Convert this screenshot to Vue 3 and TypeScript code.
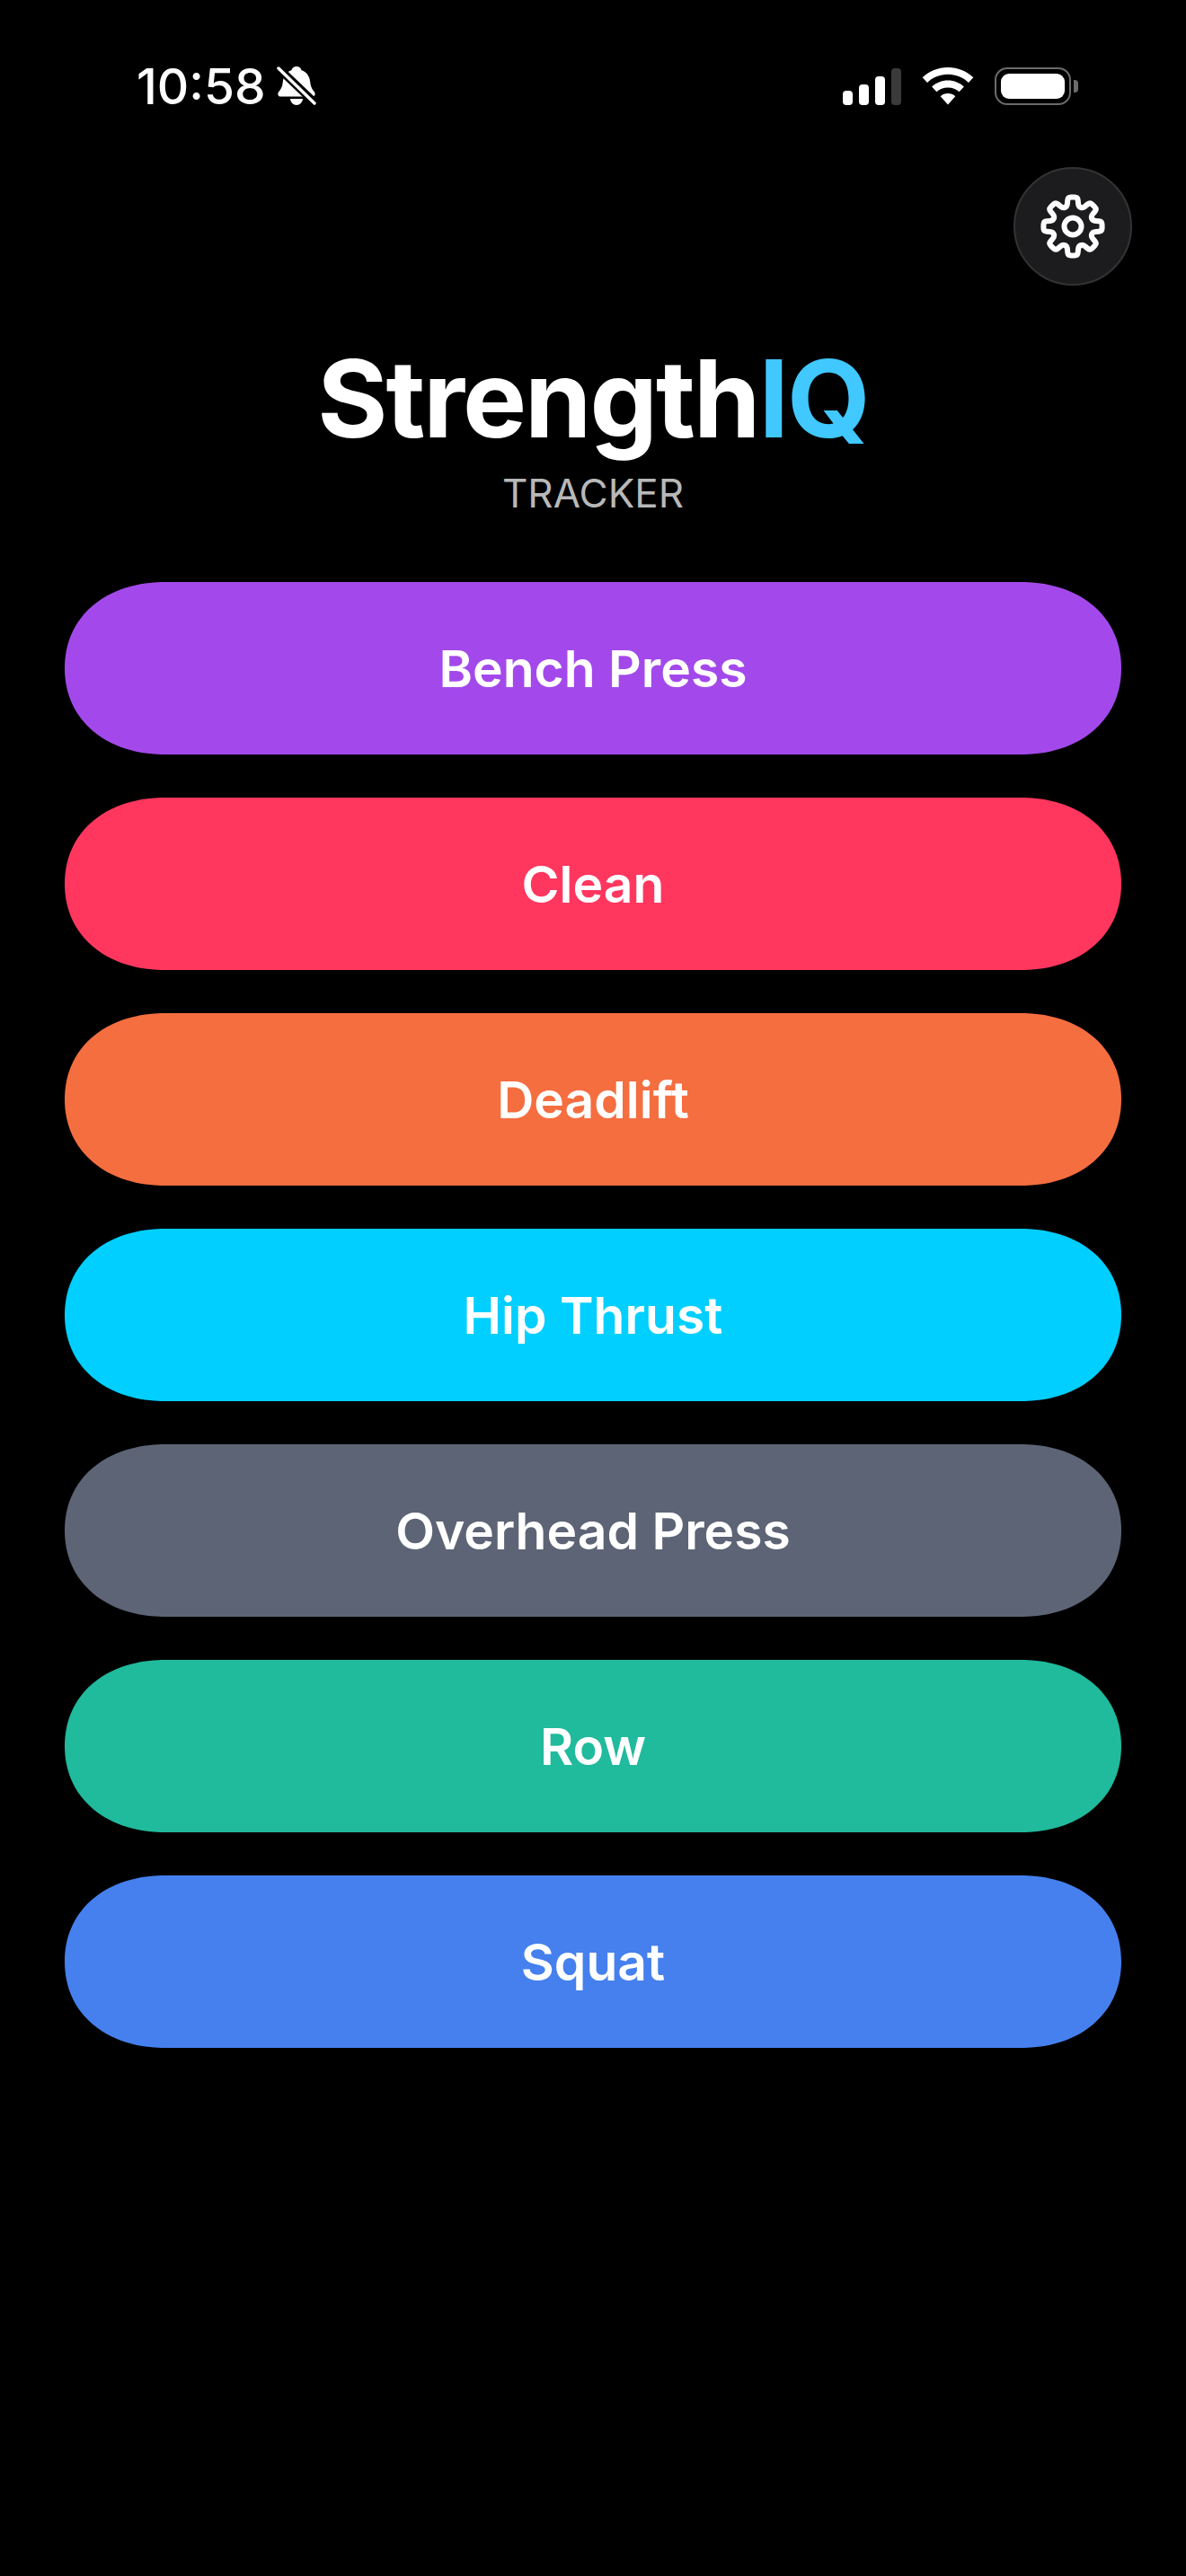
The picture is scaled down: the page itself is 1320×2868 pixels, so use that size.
<script setup lang="ts">
interface Exercise {
  name: string;
  color: string;
}

const exercises: Exercise[] = [
  { name: 'Bench Press', color: '#a349eb' },
  { name: 'Clean', color: '#ff375f' },
  { name: 'Deadlift', color: '#f56e40' },
  { name: 'Hip Thrust', color: '#00cfff' },
  { name: 'Overhead Press', color: '#5d6475' },
  { name: 'Row', color: '#20ba9c' },
  { name: 'Squat', color: '#4580ee' }
];

// 8-tooth cog outline: a polygon with its corners trimmed and rounded
function buildGearPath(): string {
  const pts: [number, number][] = [];
  for (let i = 0; i < 8; i++) {
    const mid = i * 45 - 90;
    const spec: [number, number][] = [
      [23, -16],
      [33, -9.5],
      [33, 9.5],
      [23, 16]
    ];
    for (const [r, d] of spec) {
      const a = ((mid + d) * Math.PI) / 180;
      pts.push([r * Math.cos(a), r * Math.sin(a)]);
    }
  }
  const towards = (from: [number, number], to: [number, number]) => {
    const len = Math.hypot(to[0] - from[0], to[1] - from[1]);
    const t = Math.min(0.5, 3.5 / len);
    return `${(from[0] + (to[0] - from[0]) * t).toFixed(2)} ${(from[1] + (to[1] - from[1]) * t).toFixed(2)}`;
  };
  let d = '';
  pts.forEach((p, i) => {
    const prev = pts[(i + pts.length - 1) % pts.length];
    const next = pts[(i + 1) % pts.length];
    d += `${i === 0 ? 'M' : 'L'}${towards(p, prev)}Q${p[0].toFixed(2)} ${p[1].toFixed(2)} ${towards(p, next)}`;
  });
  return d + 'Z';
}

const gearPath = buildGearPath();
</script>

<template>
  <div class="screen">
    <header class="status">
      <div class="status-left">
        <span class="time">10:58</span>
        <svg class="bell" viewBox="0 0 44 46" width="44" height="46">
          <path fill="#fff" d="M22 1c3 0 5 1.700 5.600 4.200 6 1.900 9 6.800 9.600 13 .5 4.800 2 8.400 4.600 11 1.600 1.700 1 5.300-2 5.300H4.200c-3 0-3.600-3.600-2-5.300 2.600-2.600 4.100-6.200 4.600-11 .6-6.200 3.600-11.100 9.600-13C17 2.700 19 1 22 1z" />
          <path fill="#fff" d="M15 37h14c-.4 4-3.300 7-7 7s-6.600-3-7-7z" />
          <path stroke="#000" stroke-width="9" d="M-1 0l46 44" />
          <path stroke="#fff" stroke-width="3.500" stroke-linecap="round" d="M2 3l40 39" />
        </svg>
      </div>
      <div class="status-right">
        <div class="signal">
          <i class="bar b1"></i>
          <i class="bar b2"></i>
          <i class="bar b3"></i>
          <i class="bar b4"></i>
        </div>
        <svg class="wifi" viewBox="0 0 58 42" width="58" height="42">
          <path fill="#fff" d="M29 0c10.800 0 20.800 4.200 28.300 11.300L52 17C46 11.300 37.900 7.800 29 7.800S12 11.300 6 17L.7 11.300C8.200 4.200 18.200 0 29 0z" />
          <path fill="#fff" d="M29 14.500c6.900 0 13.200 2.700 17.900 7l-5.300 5.700C38.300 24.200 33.900 22.400 29 22.400s-9.300 1.800-12.600 4.800l-5.300-5.700c4.700-4.300 11-7 17.900-7z" />
          <path fill="#fff" d="M29 29c3.200 0 6.100 1.200 8.300 3.200L29 41.500l-8.300-9.300C22.900 30.200 25.800 29 29 29z" />
        </svg>
        <div class="battery">
          <div class="battery-fill"></div>
        </div>
        <i class="battery-nub"></i>
      </div>
    </header>

    <div class="toolbar">
      <button class="settings" type="button" aria-label="Settings">
        <svg viewBox="-40 -40 80 80" width="80" height="80" fill="none" stroke="#fff" stroke-width="6" stroke-linejoin="round">
          <path :d="gearPath" />
          <circle cx="0" cy="0" r="9.500" />
        </svg>
      </button>
    </div>

    <div class="brand">
      <h1 class="title">Strength<span class="accent">IQ</span></h1>
      <p class="subtitle">TRACKER</p>
    </div>

    <main class="list">
      <button
        v-for="item in exercises"
        :key="item.name"
        class="exercise"
        type="button"
        :style="{ background: item.color }"
      >
        {{ item.name }}
      </button>
    </main>
  </div>
</template>

<style scoped>
.screen {
  height: 2868px;
  background: #000;
  color: #fff;
  font-family: Inter, "Liberation Sans", sans-serif;
  overflow: hidden;
}

.status {
  display: flex;
  justify-content: space-between;
  align-items: center;
  height: 48px;
  padding: 72px 120px 0 152px;
}

.status-left {
  display: flex;
  align-items: center;
  gap: 12px;
}

.time {
  font-size: 55px;
  font-weight: 500;
  line-height: 48px;
}

.bell {
  display: block;
}

.status-right {
  display: flex;
  align-items: center;
}

.signal {
  display: flex;
  align-items: flex-end;
  gap: 7px;
  margin-right: 23px;
}

.bar {
  display: block;
  width: 11px;
  background: #fff;
  border-radius: 4px;
}

.b1 {
  height: 16px;
}

.b2 {
  height: 23px;
}

.b3 {
  height: 32px;
}

.b4 {
  height: 41px;
  background: #3a3a3a;
}

.wifi {
  display: block;
  margin-right: 23px;
}

.battery {
  box-sizing: border-box;
  width: 85px;
  height: 42px;
  padding: 5px;
  border: 2px solid #6b6b6b;
  border-radius: 14px;
}

.battery-fill {
  height: 100%;
  background: #fff;
  border-radius: 9px;
}

.battery-nub {
  display: block;
  width: 5px;
  height: 14px;
  margin-left: 3px;
  background: #6b6b6b;
  border-radius: 0 4px 4px 0;
}

.toolbar {
  display: flex;
  justify-content: flex-end;
  padding: 66px 60px 0 0;
}

.settings {
  display: flex;
  align-items: center;
  justify-content: center;
  box-sizing: border-box;
  width: 132px;
  height: 132px;
  padding: 0;
  background: #1c1c1e;
  border: 2px solid #333;
  border-radius: 50%;
}

.brand {
  display: flex;
  flex-direction: column;
  align-items: center;
  padding-top: 58px;
}

.title {
  margin: 0;
  font-size: 119.500px;
  font-weight: 700;
  line-height: 136px;
  letter-spacing: -2px;
}

.accent {
  color: #40c8ff;
}

.subtitle {
  margin: 12px 0 0;
  font-size: 44px;
  font-weight: 400;
  line-height: 50px;
  color: #b8b8b8;
}

.list {
  display: flex;
  flex-direction: column;
  gap: 48px;
  padding: 74px 72px 0;
}

.exercise {
  height: 192px;
  padding: 0;
  border: none;
  border-radius: 112px / 96px;
  corner-shape: superellipse(1.1);
  color: #fff;
  font-family: inherit;
  font-size: 57px;
  font-weight: 600;
}
</style>

<style>
body {
  background: #000;
}
</style>
